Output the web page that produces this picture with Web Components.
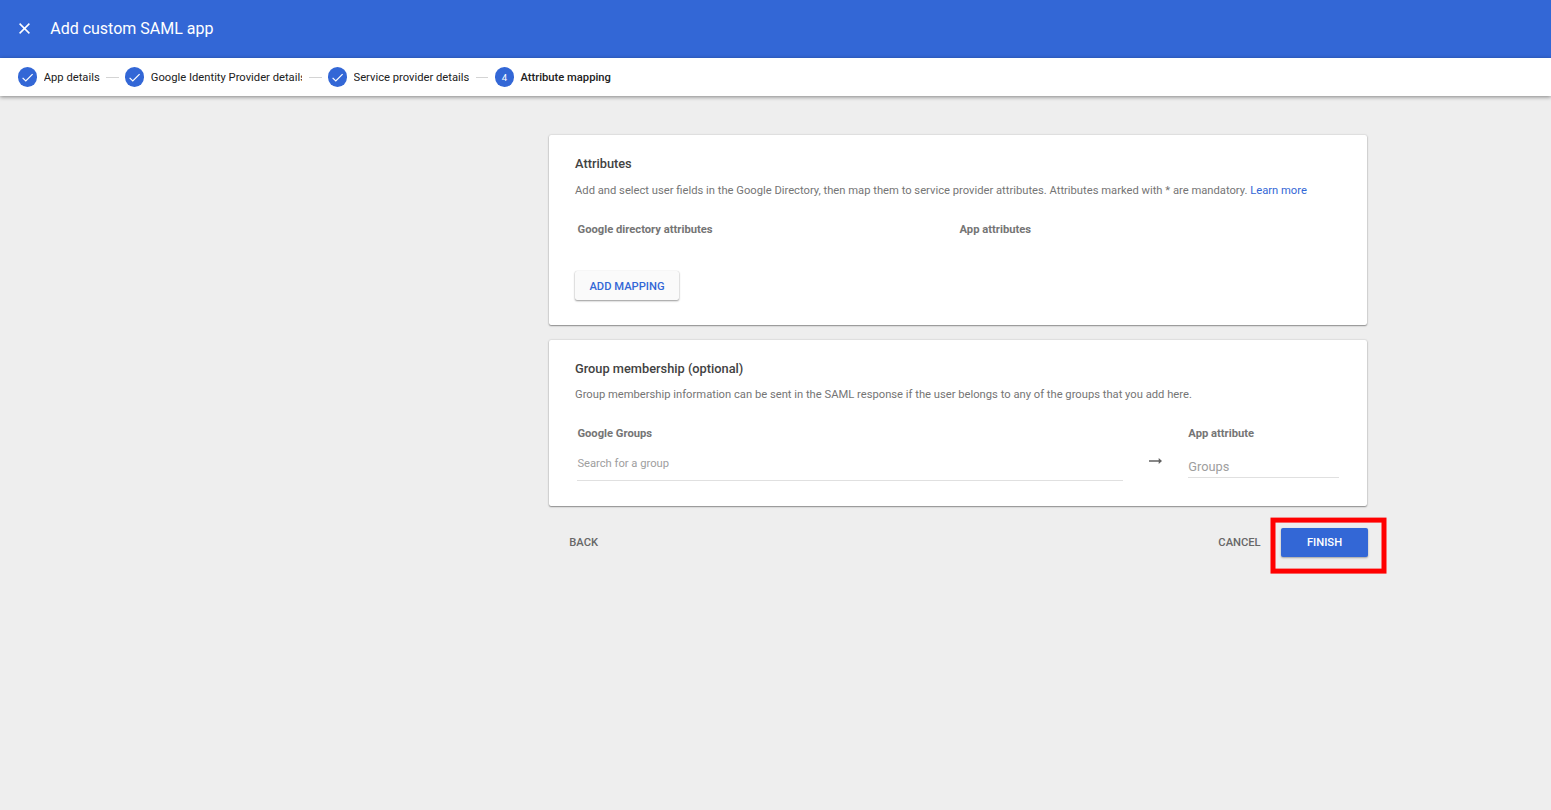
<!DOCTYPE html>
<html lang="en">
<head>
<meta charset="utf-8">
<title>Add custom SAML app</title>
<style>
	body {
		margin: 0;
		background: #eee;
		font-family: Roboto, sans-serif;
		font-size: 11.215px;
	}
</style>
</head>
<body>
<saml-wizard></saml-wizard>

<script>
class BaseElement extends HTMLElement {
	constructor() {
		super();
		this.attachShadow({ mode: 'open' });
	}

	render(html) {
		const template = document.createElement('template');
		template.innerHTML = html;
		this.shadowRoot.appendChild(template.content.cloneNode(true));
	}
}

class WizardHeader extends BaseElement {
	connectedCallback() {
		this.render(`
			<style>
				:host {
					display: flex;
					align-items: center;
					box-sizing: border-box;
					height: 58px;
					padding: 0 19px;
					gap: 20.2px;
					background: #3367d6;
					color: #fff;
				}
				svg { display: block; margin-top: -1px; }
				h1 {
					margin: 0;
					font-size: 16px;
					font-weight: 400;
					line-height: 20px;
				}
			</style>
			<svg width="11" height="11" viewBox="0 0 11 11" fill="none" stroke="#fff" stroke-width="1.5">
				<path d="M.6.6l9.8 9.8M10.4.6L.6 10.4"/>
			</svg>
			<h1><slot></slot></h1>
		`);
	}
}

class WizardStep extends BaseElement {
	connectedCallback() {
		const active = this.hasAttribute('active');
		const mark = active
			? this.getAttribute('number')
			: `<svg width="19" height="19" viewBox="0 0 19 19" fill="none" stroke="#fff" stroke-width="1.2"><path d="M4.6 9.8l3.2 3.2 6.8-6.8"/></svg>`;
		this.render(`
			<style>
				:host {
					display: flex;
					align-items: center;
					color: #212121;
				}
				.badge {
					display: flex;
					align-items: center;
					justify-content: center;
					width: 19.2px;
					height: 19.2px;
					margin-right: 6.4px;
					border-radius: 50%;
					background: #3367d6;
					color: #fff;
					font-size: 9.6px;
				}
				.label {
					width: var(--label-width, auto);
					overflow: hidden;
					line-height: 16px;
					padding-top: 1px;
					white-space: nowrap;
				}
				:host([active]) .label { font-weight: 500; }
				.line {
					width: 12.8px;
					height: 1px;
					margin: 0 6.4px;
					background: #d4d4d4;
				}
				:host([active]) .line { display: none; }
			</style>
			<span class="badge">${mark}</span>
			<span class="label"><slot></slot></span>
			<span class="line"></span>
		`);
	}
}

class WizardStepper extends BaseElement {
	connectedCallback() {
		this.render(`
			<style>
				:host {
					display: flex;
					align-items: center;
					box-sizing: border-box;
					height: 38px;
					padding-left: 18.2px;
					background: #fff;
					box-shadow: 0 1px 4px rgba(0, 0, 0, .45);
				}
			</style>
			<slot></slot>
		`);
	}
}

class SectionCard extends BaseElement {
	connectedCallback() {
		this.render(`
			<style>
				:host {
					display: block;
					box-sizing: border-box;
					padding: 20px 26px 0;
					border-radius: 2px;
					background: #fff;
					color: #757575;
					box-shadow: 0 1px 1.5px rgba(0, 0, 0, .38), 0 0 2px rgba(0, 0, 0, .2);
				}
				h2 {
					margin: 0 0 var(--heading-gap, 9px);
					color: #424242;
					font-size: 12.8px;
					font-weight: 500;
					line-height: 18px;
				}
				p { margin: 0; line-height: 16px; }
			</style>
			<h2><slot name="heading"></slot></h2>
			<p><slot name="description"></slot></p>
			<slot></slot>
		`);
	}
}

class MaterialButton extends BaseElement {
	connectedCallback() {
		this.render(`
			<style>
				:host { display: inline-flex; }
				button {
					box-sizing: border-box;
					width: 100%;
					height: 29px;
					padding: 0;
					border: 0;
					border-radius: 2px;
					background: transparent;
					color: #676767;
					font: 500 11.2px/29px Roboto, sans-serif;
					text-transform: uppercase;
					white-space: nowrap;
				}
				:host([kind="raised"]) button {
					padding-top: 1px;
					background: #fafafa;
					color: #3367d6;
					box-shadow: 0 1px 2px rgba(0, 0, 0, .4), 0 0 1px rgba(0, 0, 0, .16);
				}
				:host([kind="primary"]) button {
					background: #3367d6;
					color: #fff;
					box-shadow: 0 1px 2px rgba(0, 0, 0, .32);
				}
			</style>
			<button type="button"><slot></slot></button>
		`);
	}
}

class TextField extends BaseElement {
	connectedCallback() {
		this.render(`
			<style>
				:host { display: block; }
				label {
					display: block;
					color: #757575;
					font-weight: 700;
					line-height: 16px;
				}
				input {
					display: block;
					box-sizing: border-box;
					width: 100%;
					height: var(--field-height, 31px);
					margin-top: var(--field-gap, 8px);
					padding: var(--field-pad, 0 0 4px);
					border: 0;
					border-bottom: 1px solid #e0e0e0;
					outline: 0;
					background: transparent;
					font: var(--field-size, 11.2px) Roboto, sans-serif;
				}
				input::placeholder { color: #9e9e9e; }
			</style>
			<label>${this.getAttribute('label')}</label>
			<input type="text" placeholder="${this.getAttribute('placeholder')}">
		`);
	}
}

class SamlWizard extends BaseElement {
	connectedCallback() {
		this.render(`
			<style>
				:host { display: block; min-height: 100vh; }
				main {
					width: 818px;
					margin: 39px 0 0 549px;
				}
				a { color: #3367d6; text-decoration: none; }
				.attributes {
					height: 190px;
					margin-bottom: 15px;
					--heading-gap: 10px;
				}
				.columns {
					display: grid;
					grid-template-columns: 382px 1fr;
					padding: 23px 0 0 2.5px;
					font-weight: 700;
					line-height: 16px;
				}
				.add { width: 104px; margin-top: 33px; }
				.groups { height: 166px; }
				.mapping {
					display: flex;
					padding: 23px 0 0 2.4px;
				}
				.search { width: 546px; }
				.arrow { flex: none; margin: 31px 26px 0 25.9px; }
				.attribute {
					width: 151px;
					--field-size: 12.8px;
					--field-height: 26px;
					--field-gap: 10px;
					--field-pad: 3px 0 0;
				}
				.actions {
					display: flex;
					align-items: center;
					margin-right: -1px;
					padding-top: 22px;
				}
				.back { width: 69.4px; margin-right: auto; }
				.cancel { width: 63px; margin-right: 10px; }
				.target { position: relative; width: 87px; }
				.highlight {
					position: absolute;
					top: -11px;
					left: -11px;
					pointer-events: none;
				}
				.finish { width: 87px; }
			</style>
			<wizard-header>Add custom SAML app</wizard-header>
			<wizard-stepper>
				<wizard-step>App details</wizard-step>
				<wizard-step style="--label-width: 151.5px">Google Identity Provider details</wizard-step>
				<wizard-step>Service provider details</wizard-step>
				<wizard-step active number="4">Attribute mapping</wizard-step>
			</wizard-stepper>
			<main>
				<section-card class="attributes">
					<span slot="heading">Attributes</span>
					<span slot="description">Add and select user fields in the Google Directory, then map them to service provider attributes. Attributes marked with * are mandatory. <a href="#">Learn more</a></span>
					<div class="columns">
						<span>Google directory attributes</span>
						<span>App attributes</span>
					</div>
					<material-button class="add" kind="raised">Add mapping</material-button>
				</section-card>
				<section-card class="groups">
					<span slot="heading">Group membership (optional)</span>
					<span slot="description">Group membership information can be sent in the SAML response if the user belongs to any of the groups that you add here.</span>
					<div class="mapping">
						<text-field class="search" label="Google Groups" placeholder="Search for a group"></text-field>
						<svg class="arrow" width="13" height="8" viewBox="0 0 13 8" fill="#616161">
							<path d="M0 3.2h9.7V1L13 4 9.7 7V4.8H0z"/>
						</svg>
						<text-field class="attribute" label="App attribute" placeholder="Groups"></text-field>
					</div>
				</section-card>
				<div class="actions">
					<material-button class="back">Back</material-button>
					<material-button class="cancel">Cancel</material-button>
					<div class="target">
						<material-button class="finish" kind="primary">Finish</material-button>
						<svg class="highlight" width="118" height="58" fill="none" stroke="#f00" stroke-width="5">
							<rect x="3" y="3.1" width="111" height="51"/>
						</svg>
					</div>
				</div>
			</main>
		`);
	}
}

customElements.define('wizard-header', WizardHeader);
customElements.define('wizard-step', WizardStep);
customElements.define('wizard-stepper', WizardStepper);
customElements.define('section-card', SectionCard);
customElements.define('material-button', MaterialButton);
customElements.define('text-field', TextField);
customElements.define('saml-wizard', SamlWizard);
</script>
</body>
</html>
